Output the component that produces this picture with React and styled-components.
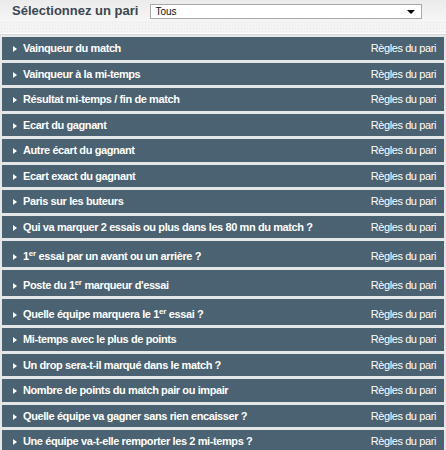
import React from "react";
import styled, { createGlobalStyle } from "styled-components";

const Global = createGlobalStyle`
  html, body { margin: 0; padding: 0; background: #ffffff; }
  body { font-family: "Liberation Sans", Arial, sans-serif; }
`;

const Page = styled.div`
  width: 446px;
  height: 450px;
  overflow: hidden;
  background: #e4e6e7;
`;

const Header = styled.div`
  height: 21px;
  display: flex;
  align-items: center;
  padding-left: 12px;
  gap: 12px;
  background: linear-gradient(#ebebeb, #f6f6f6);
`;

const Title = styled.h1`
  margin: 0;
  font-size: 13px;
  font-weight: bold;
  color: #3b4650;
  line-height: 16px;
`;

const Select = styled.div`
  width: 260px;
  height: 13px;
  border: 1px solid #a9a9a9;
  background: #ffffff;
  display: flex;
  align-items: center;
  justify-content: space-between;
  padding: 0 6px 0 4px;
  font-size: 10px;
  color: #111;
  margin-top: 2px;
`;

const Caret = styled.span`
  width: 0;
  height: 0;
  border-left: 4px solid transparent;
  border-right: 4px solid transparent;
  border-top: 4px solid #000;
`;

const Band = styled.div`
  height: 12px;
  background-color: #f4f4f4;
  background-image: radial-gradient(#e8e8e8 0.6px, transparent 0.8px);
  background-size: 3px 3px;
  border-bottom: 1px solid #ffffff;
  box-shadow: 0 1px 0 #d8d8d8;
`;

const List = styled.div`
  padding: 3px 2px 0 2px;
  display: flex;
  flex-direction: column;
  gap: 3px;
`;

const Row = styled.div`
  display: flex;
  align-items: baseline;
  justify-content: space-between;
  background: #4a6271;
  color: #ffffff;
  padding: ${(p) => (p.$tall ? "8.5px" : "5px")} 8px 5px 11px;
  line-height: 12.5px;
  font-size: 11px;
  letter-spacing: -0.4px;
`;

const Name = styled.span`
  font-weight: bold;
  &::before {
    content: "";
    display: inline-block;
    width: 0;
    height: 0;
    border-top: 3.5px solid transparent;
    border-bottom: 3.5px solid transparent;
    border-left: 4px solid #ffffff;
    margin-right: 6px;
    vertical-align: 0px;
  }
  sup {
    font-size: 8px;
    line-height: 0;
    vertical-align: 4px;
    letter-spacing: -0.2px;
  }
`;

const Rules = styled.span`
  font-weight: normal;
`;

const bets = [
  "Vainqueur du match",
  "Vainqueur à la mi-temps",
  "Résultat mi-temps / fin de match",
  "Ecart du gagnant",
  "Autre écart du gagnant",
  "Ecart exact du gagnant",
  "Paris sur les buteurs",
  "Qui va marquer 2 essais ou plus dans les 80 mn du match ?",
  ["1", "er", " essai par un avant ou un arrière ?"],
  ["Poste du 1", "er", " marqueur d'essai"],
  ["Quelle équipe marquera le 1", "er", " essai ?"],
  "Mi-temps avec le plus de points",
  "Un drop sera-t-il marqué dans le match ?",
  "Nombre de points du match pair ou impair",
  "Quelle équipe va gagner sans rien encaisser ?",
  "Une équipe va-t-elle remporter les 2 mi-temps ?",
];

export default function App() {
  return (
    <Page>
      <Global />
      <Header>
        <Title>Sélectionnez un pari</Title>
        <Select>
          <span>Tous</span>
          <Caret />
        </Select>
      </Header>
      <Band />
      <List>
        {bets.map((b, i) => {
          const tall = Array.isArray(b);
          return (
            <Row key={i} $tall={tall}>
              <Name>
                {tall ? (
                  <>
                    {b[0]}
                    <sup>{b[1]}</sup>
                    {b[2]}
                  </>
                ) : (
                  b
                )}
              </Name>
              <Rules>Règles du pari</Rules>
            </Row>
          );
        })}
      </List>
    </Page>
  );
}
